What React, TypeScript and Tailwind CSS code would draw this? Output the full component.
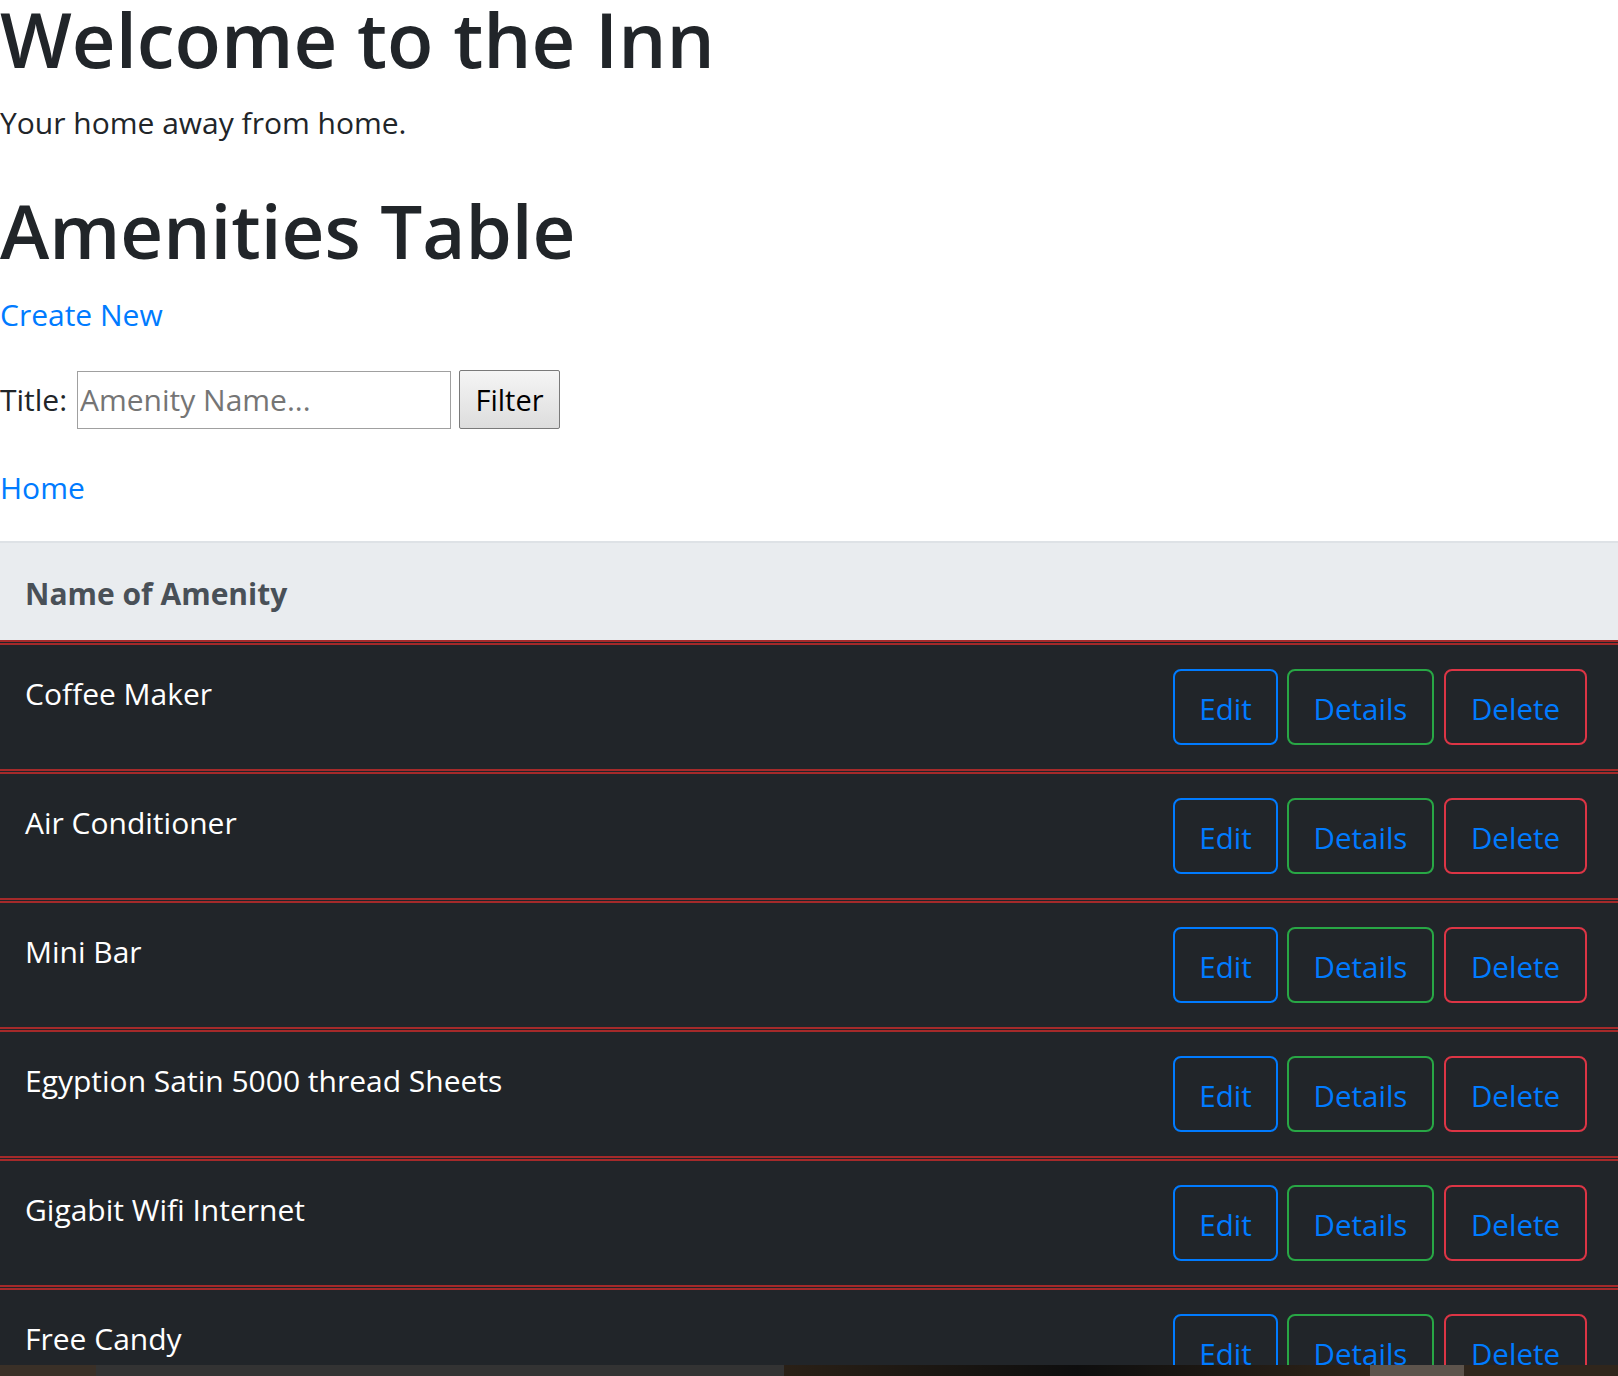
const amenities = [
  'Coffee Maker',
  'Air Conditioner',
  'Mini Bar',
  'Egyption Satin 5000 thread Sheets',
  'Gigabit Wifi Internet',
  'Free Candy',
]

// --- Amenity Row ---

const AmenityRow = ({ name }: { name: string }) => (
  <div className="flex h-[129px] border-t-[5px] border-double border-[#a52a2a] bg-[#212529]">
    <div className="flex-1 pl-[25px] pt-[26px] text-[30px] leading-[45px] text-white">{name}</div>
    <div className="flex items-start pr-[31px] pt-[24px] text-[29.5px] leading-[45px] text-[#007bff]">
      <a className="flex h-[76px] w-[105px] items-center justify-center rounded-lg border-2 border-[#007bff] pt-[3px]">
        Edit
      </a>
      <a className="ml-[9px] flex h-[76px] w-[147px] items-center justify-center rounded-lg border-2 border-[#28a745] pt-[3px]">
        Details
      </a>
      <a className="ml-[10px] flex h-[76px] w-[143px] items-center justify-center rounded-lg border-2 border-[#dc3545] pt-[3px]">
        Delete
      </a>
    </div>
  </div>
)

// --- Page ---

export default function App() {
  return (
    <div className="relative h-[1376px] overflow-hidden bg-white font-['Open_Sans',sans-serif] text-[#212529]">
      <h1 className="mt-[1px] text-[76px] font-semibold leading-[76px]">Welcome to the Inn</h1>
      <p className="mt-[23px] text-[30px] leading-[45px]">Your home away from home.</p>

      <h1 className="mt-[47px] text-[74.5px] font-semibold leading-[76px]">Amenities Table</h1>
      <a className="mt-[24px] block text-[30px] leading-[45px] text-[#007bff]">Create New</a>

      {/* Filter form */}
      <div className="mt-[33px] flex h-[59px] items-center text-[30px] leading-[45px]">
        <span className="w-[77px]">Title:</span>
        <input
          className="h-[58px] w-[374px] border border-[#a0a0a0] bg-white px-[2px] text-[30px] outline-none placeholder:text-[#757575]"
          placeholder="Amenity Name..."
        />
        <button className="ml-[8px] h-[59px] w-[101px] rounded-[2px] border border-[#7a7a7a] bg-linear-to-b from-[#f5f5f5] to-[#dddddd] text-[29px] text-black">
          Filter
        </button>
      </div>

      <a className="mt-[36px] block text-[30px] leading-[45px] text-[#007bff]">Home</a>

      {/* Amenities table */}
      <div className="mt-[31px]">
        <div className="h-[99px] border-t-2 border-[#dee2e6] bg-[#e9ecef] pl-[25px] pt-[28px] text-[30px] font-bold leading-[45px] text-[#495057]">
          Name of Amenity
        </div>
        {amenities.map((name) => (
          <AmenityRow key={name} name={name} />
        ))}
      </div>

      {/* desktop strip peeking under the window */}
      <div className="fixed inset-x-0 bottom-0 flex h-[11px]">
        <div className="w-[96px] bg-[#3a3027]" />
        <div className="w-[688px] bg-[#333333]" />
        <div className="w-[586px] bg-linear-to-r from-[#2a2016] via-[#0e0e0e] to-[#2f2418]" />
        <div className="w-[94px] bg-[#5d544c]" />
        <div className="flex-1 bg-[#30261c]" />
      </div>
    </div>
  )
}
